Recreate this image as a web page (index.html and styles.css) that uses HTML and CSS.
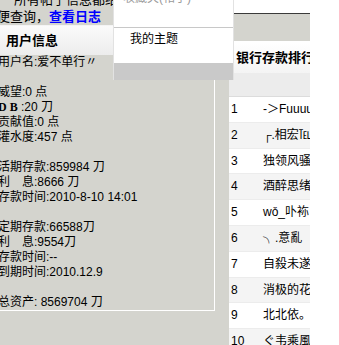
FILE: index.html
```html
<!DOCTYPE html>
<html lang="zh-CN">
<head>
<meta charset="utf-8">
<title>用户信息</title>
<link rel="stylesheet" href="styles.css">
</head>
<body>
<div class="page">
  <div class="leftcol">
    <div class="notice">
      <div class="notice-line">所有帖子信息都给你记录着，方</div>
      <div class="notice-line">便查询，<a class="log">查看日志</a></div>
    </div>
    <div class="panel">
      <div class="panel-head">用户信息</div>
      <div class="panel-body">
        <p>用户名:爱不单行〃</p>
        <p class="blank"></p>
        <p>威望:0 点</p>
        <p><b class="db">D B</b> :20 刀</p>
        <p>贡献值:0 点</p>
        <p>灌水度:457 点</p>
        <p class="blank"></p>
        <p>活期存款:859984 刀</p>
        <p>利　息:8666 刀</p>
        <p>存款时间:2010-8-10 14:01</p>
        <p class="blank"></p>
        <p>定期存款:66588刀</p>
        <p>利　息:9554刀</p>
        <p>存款时间:--</p>
        <p>到期时间:2010.12.9</p>
        <p class="blank"></p>
        <p>总资产: 8569704 刀</p>
      </div>
    </div>
  </div>
  <div class="rightcol">
    <div class="top-white"></div>
    <div class="top-gray"></div>
    <div class="rank-head">银行存款排行榜</div>
    <div class="rank-sub"></div>
    <div class="rows">
      <div class="row"><span class="rank">1</span><span class="name">-＞Fuuuu</span></div>
      <div class="row"><span class="rank">2</span><span class="name">┌.相宏℡</span></div>
      <div class="row"><span class="rank">3</span><span class="name">独领风骚</span></div>
      <div class="row"><span class="rank">4</span><span class="name">酒醉思绪</span></div>
      <div class="row"><span class="rank">5</span><span class="name">wǒ_卟袮</span></div>
      <div class="row"><span class="rank">6</span><span class="name">╮.意亂</span></div>
      <div class="row"><span class="rank">7</span><span class="name">自殺未遂</span></div>
      <div class="row"><span class="rank">8</span><span class="name">消极的花</span></div>
      <div class="row"><span class="rank">9</span><span class="name">北北依。</span></div>
      <div class="row"><span class="rank">10</span><span class="name">ぐ韦乘風</span></div>
    </div>
  </div>
  <div class="menu">
    <div class="menu-cut"><div class="menu-cut-text">收藏夹(帖子)</div></div>
    <div class="menu-item">我的主题</div>
    <div class="menu-fill"></div>
    <div class="menu-foot"></div>
  </div>
</div>
</body>
</html>
```

FILE: styles.css
```css
html, body {
  margin: 0;
  padding: 0;
  background: #ffffff;
  font-family: "Liberation Sans", "Noto Sans CJK SC", sans-serif;
  font-size: 12px;
  color: #000;
}

.page {
  position: relative;
  width: 310px;
  height: 345px;
  overflow: hidden;
  background: #d4d4ce;
  display: flex;
}

.leftcol {
  width: 229px;
  flex: none;
}

.notice {
  height: 25px;
  overflow: hidden;
  font-size: 13px;
  line-height: 15px;
}

.notice-line {
  white-space: nowrap;
  margin-left: -3px;
}

.notice-line:first-child {
  margin-top: -8px;
  margin-left: 14px;
  height: 17px;
  line-height: 15px;
}

.log {
  color: #0000ff;
  font-weight: bold;
}

.panel {
  width: 214px;
  border-right: 1px solid #ffffff;
  border-bottom: 1px solid #ffffff;
  height: 285px;
}

.panel-head {
  height: 30px;
  line-height: 30px;
  font-size: 13px;
  font-weight: bold;
  padding-left: 6px;
  border-top: 1px solid #f4f4f4;
  box-sizing: border-box;
  background: linear-gradient(#fbfbfb, #ececec);
}

.panel-body p {
  margin: 0 0 0 -2px;
  height: 15px;
  line-height: 15px;
  white-space: nowrap;
}

.db {
  font-family: "Liberation Serif", serif;
}

.rightcol {
  width: 81px;
  flex: none;
}

.top-white {
  height: 13px;
  background: #ffffff;
  border-bottom: 1px solid #3a3a3a;
}

.top-gray {
  height: 27px;
  background: #d4d4ce;
  border-bottom: 2px solid #ffffff;
}

.rank-head {
  height: 30px;
  line-height: 30px;
  padding-left: 7px;
  font-size: 13px;
  font-weight: bold;
  white-space: nowrap;
  overflow: hidden;
  background: linear-gradient(#ffffff, #f4f4f4);
}

.rank-sub {
  height: 23px;
  background: #ececec;
  border-bottom: 1px solid #dcdcdc;
}

.row {
  height: 24.8px;
  line-height: 25px;
  border-bottom: 1px solid #ececec;
  background: #ffffff;
  display: flex;
  white-space: nowrap;
  overflow: hidden;
}

.row:nth-child(even) {
  background: #f4f4f4;
}

.rank {
  width: 34px;
  padding-left: 2px;
  flex: none;
  box-sizing: border-box;
}

.name {
  flex: none;
}

.menu {
  position: absolute;
  left: 113px;
  top: 0;
  width: 119px;
  height: 80px;
  border-left: 1px solid #e2e2e2;
  border-right: 1px solid #e2e2e2;
  display: flex;
  flex-direction: column;
}

.menu-cut {
  height: 27px;
  overflow: hidden;
  background: #ffffff;
  border-bottom: 1px solid #c8c8c8;
}

.menu-cut-text {
  margin-top: -9px;
  padding-left: 9px;
  line-height: 15px;
  color: #9a9a9a;
  white-space: nowrap;
}

.menu-item {
  height: 22px;
  line-height: 22px;
  padding-left: 16px;
  background: #ffffff;
}

.menu-fill {
  height: 13px;
  background: #ffffff;
}

.menu-foot {
  flex: 1;
  background: #c9c9c9;
}
```
